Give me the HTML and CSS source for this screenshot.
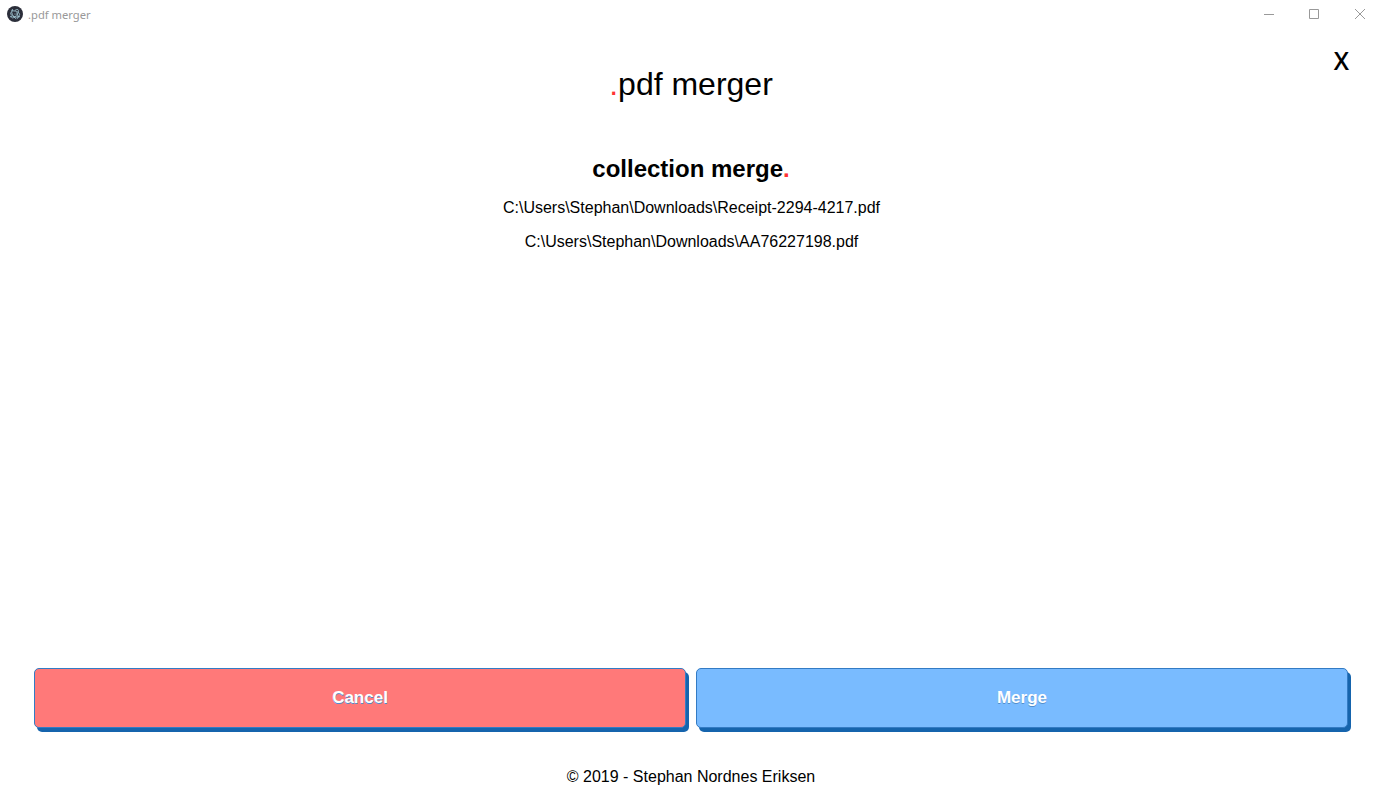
FILE: index.html
```html
<!DOCTYPE html>
<html lang="en">
<head>
<meta charset="utf-8">
<title>.pdf merger</title>
<link rel="stylesheet" href="styles.css">
</head>
<body>
<div class="window">
  <header class="titlebar">
    <svg class="app-icon" width="16" height="16" viewBox="0 0 16 16">
      <circle cx="8" cy="8" r="8" fill="#2b2e3a"/>
      <g fill="none" stroke="#a9d0dd" stroke-width=".85">
        <path d="M4.200 6.200C2.600 7.800 4.800 10.200 8 10.900c1.500.3 2.800.3 3.700-.1"/>
        <path d="M12 9.800c1.700-1.600-.4-3.900-3.600-4.700-1.300-.3-2.400-.3-3.200-.1"/>
        <path d="M5.400 3.800c-1.300.9-.8 3.900 1 6.400.9 1.300 2 2.200 2.900 2.600M10.300 12.700c1.300-.7.900-3.600-.8-6.200"/>
        <path d="M4.500 11.400c.9 1.100 3.200.1 5-2.100C11.300 7 12 4.500 11 3.700c-.7-.5-1.900-.1-3.100.8"/>
      </g>
      <g fill="#a9d0dd"><circle cx="8" cy="8" r=".6"/><circle cx="5.400" cy="3.900" r=".7"/><circle cx="4" cy="10.600" r=".8"/><circle cx="12" cy="10.600" r=".8"/></g>
    </svg>
    <span class="window-title">.pdf merger</span>
    <div class="controls">
      <svg width="46" height="28" viewBox="0 0 46 28"><path d="M18 14.5h10"/></svg>
      <svg width="45" height="28" viewBox="0 0 45 28"><path d="M17.500 9.500h9v9h-9z"/></svg>
      <svg width="46" height="28" viewBox="0 0 46 28"><path d="M18 9l10 10M28 9l-10 10"/></svg>
    </div>
  </header>
  <div class="close-row"><span class="close">X</span></div>
  <h1 class="logo"><span class="dot">.</span>pdf merger</h1>
  <main class="files">
    <h2 class="heading">collection merge<span class="dot">.</span></h2>
    <p class="file">C:\Users\Stephan\Downloads\Receipt-2294-4217.pdf</p>
    <p class="file">C:\Users\Stephan\Downloads\AA76227198.pdf</p>
  </main>
  <div class="actions">
    <button class="button cancel">Cancel</button>
    <button class="button merge">Merge</button>
  </div>
  <footer class="footer">© 2019 - Stephan Nordnes Eriksen</footer>
</div>
</body>
</html>
```
FILE: styles.css
```css
* { box-sizing: border-box; }
body {
  margin: 0;
  background: #fff;
  color: #000;
  font-family: "Liberation Sans", Arial, sans-serif;
  overflow: hidden;
}
.window {
  height: 791px;
  display: flex;
  flex-direction: column;
}
.titlebar {
  height: 30px;
  display: flex;
  align-items: flex-start;
  padding-left: 7px;
}
.app-icon { margin-top: 6px; }
.window-title {
  margin: 7px 0 0 5px;
  font: 11.2px/16px "Noto Sans", sans-serif;
  color: #999;
}
.controls {
  display: flex;
  margin: 0 -1px 0 auto;
}
.controls path {
  fill: none;
  stroke: #999;
  stroke-width: 1;
}
.close-row {
  height: 36px;
  display: flex;
  justify-content: flex-end;
  padding: 14px 33px 0 0;
}
.close {
  font: 600 24.5px/34px "Open Sans", sans-serif;
}
.logo {
  margin: 0;
  font-size: 32px;
  line-height: 36px;
  font-weight: 400;
  text-align: center;
}
.dot { color: #f33; }
.files {
  flex: 1;
  padding: 53px 0 0 1px;
  text-align: center;
}
.heading {
  margin: 0 0 16px -1px;
  font-size: 24px;
  line-height: 28px;
}
.file {
  margin: 0 0 16px;
  font-size: 16px;
  line-height: 18px;
}
.actions {
  display: flex;
  gap: 10px;
  padding: 0 34px;
}
.button {
  flex: 1;
  height: 60px;
  border: 1px solid #337bc4;
  border-radius: 5px;
  box-shadow: 3px 4px 0 0 #1564ad;
  color: #fff;
  font: bold 17px "Liberation Sans", Arial, sans-serif;
  text-shadow: 0 1px 0 #528ecc;
}
.cancel { background: #ff7979; }
.merge { background: #79bbff; }
.footer {
  height: 63px;
  padding-top: 40px;
  font-size: 16px;
  line-height: 18px;
  text-align: center;
}
```
